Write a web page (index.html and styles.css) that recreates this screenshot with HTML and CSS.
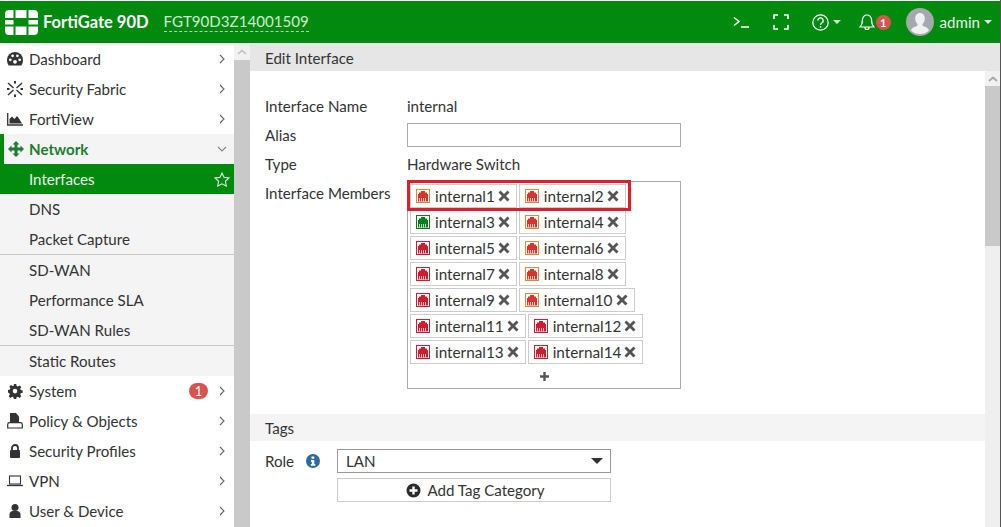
FILE: index.html
```html
<!DOCTYPE html>
<html lang="en">
<head>
    <meta charset="UTF-8">
    <meta name="viewport" content="width=device-width, initial-scale=1.0">
    <title>FortiGate 90D - Edit Interface</title>
    <link rel="stylesheet" href="styles.css">
</head>
<body>
    <svg class="defs" width="0" height="0">
        <symbol id="port" viewBox="0 0 14 14">
            <rect x="0.5" y="0.5" width="13" height="13" fill="#fff" stroke="currentColor"/>
            <path d="M5 2h4v1.500h2v1.500h1v7.500H2V5h1V3.500h2z" fill="currentColor"/>
            <path d="M3.500 9v3.500M5.500 9v3.500M7.500 9v3.500M9.500 9v3.500" stroke="#fff" stroke-width=".7"/>
        </symbol>
        <symbol id="close" viewBox="0 0 12 12">
            <path d="M2.500 0.500L6 4l3.500-3.500 2 2L8 6l3.500 3.500-2 2L6 8l-3.500 3.500-2-2L4 6 .5 2.500z" fill="currentColor"/>
        </symbol>
        <symbol id="chev" viewBox="0 0 8 12">
            <path d="M2 2l4 4-4 4" fill="none" stroke="currentColor" stroke-width="1.100"/>
        </symbol>
    </svg>

    <header class="topbar">
        <svg class="logo" width="33" height="25" viewBox="0 0 33 25">
            <path d="M4 0h4.500v8H0V4a4 4 0 0 1 4-4zM10.500 0h11v8h-11zM23.500 0H29a4 4 0 0 1 4 4v4h-9.500zM0 10h8.500v4.500H0zM23.500 10H33v4.500h-9.500zM0 16.500h8.500V25H4a4 4 0 0 1-4-4zM10.500 16.500h11V25h-11zM23.500 16.500H33V21a4 4 0 0 1-4 4h-5.500z" fill="#fff"/>
        </svg>
        <span class="brand">FortiGate 90D</span>
        <span class="serial">FGT90D3Z14001509</span>

        <div class="topbar-right">
            <svg class="tb-cli" width="16" height="12" viewBox="0 0 16 12">
                <path d="M1 1.500L6 5.500 1 9.500M8 11h8" fill="none" stroke="#fff" stroke-width="1.500"/>
            </svg>
            <svg class="tb-full" width="16" height="16" viewBox="0 0 16 16">
                <path d="M1 5V1h4M11 1h4v4M15 11v4h-4M5 15H1v-4" fill="none" stroke="#fff" stroke-width="1.600"/>
            </svg>
            <svg class="tb-help" width="17" height="17" viewBox="0 0 17 17">
                <circle cx="8.500" cy="8.500" r="7.700" fill="none" stroke="#fff" stroke-width="1.200"/>
                <path d="M5.800 6.600a2.700 2.700 0 1 1 4.200 2.200c-1 .7-1.500 1-1.500 2.200" fill="none" stroke="#fff" stroke-width="1.300"/>
                <rect x="7.800" y="12" width="1.500" height="1.600" fill="#fff"/>
            </svg>
            <span class="caret tb-caret"></span>
            <svg class="tb-bell" width="16" height="17" viewBox="0 0 16 17">
                <path d="M8 1a4.500 4.500 0 0 0-4.500 4.500c0 4-.8 5.800-2.500 7.500h14c-1.700-1.700-2.500-3.500-2.500-7.500A4.500 4.500 0 0 0 8 1zM6 13.500a2 2 0 0 0 4 0" fill="none" stroke="#fff" stroke-width="1.200"/>
            </svg>
            <span class="tb-badge">1</span>
            <svg class="avatar" width="28" height="28" viewBox="0 0 28 28">
                <circle cx="14" cy="14" r="14" fill="#a5a8ac"/>
                <path d="M14 5c3 0 4.800 2.300 4.800 5.500 0 2.500-1 4.500-2.300 5.600v1.700c2.500 1 5.500 1.700 6.500 4.700A13 13 0 0 1 14 26a13 13 0 0 1-9-3.500c1-3 4-3.700 6.500-4.700v-1.700C10.200 15 9.200 13 9.200 10.500 9.200 7.300 11 5 14 5z" fill="#f1f1f1"/>
            </svg>
            <span class="tb-user">admin</span>
            <span class="caret"></span>
        </div>
    </header>

    <div class="layout">
        <nav class="sidebar">
            <a class="nav-item">
                <svg class="nav-icon" viewBox="0 0 16 14"><path d="M8 0a8 8 0 0 0-8 8c0 2.200.7 4 1.600 5.500h12.800C15.300 12 16 10.200 16 8a8 8 0 0 0-8-8z" fill="#333"/><circle cx="3.300" cy="7.800" r="1.400" fill="#fff"/><circle cx="5.600" cy="3.800" r="1.400" fill="#fff"/><circle cx="12.700" cy="7.800" r="1.400" fill="#fff"/><circle cx="10.400" cy="3.800" r="1.400" fill="#fff"/><circle cx="8" cy="9.800" r="1.900" fill="#fff"/></svg>
                <span class="nav-label">Dashboard</span>
                <svg class="chev"><use href="#chev"/></svg>
            </a>
            <a class="nav-item">
                <svg class="nav-icon" viewBox="0 0 16 16"><path d="M1 2l5.500 5M15 2L9.500 7M1 14l5.500-5M15 14L9.500 9" stroke="#333" stroke-width="1.400" fill="none"/><path d="M7 0h2v2.500H7zM7 13.500h2V16H7zM0 7h2.500v2H0zM13.500 7H16v2h-2.500z" fill="#333"/></svg>
                <span class="nav-label">Security Fabric</span>
                <svg class="chev"><use href="#chev"/></svg>
            </a>
            <a class="nav-item">
                <svg class="nav-icon" viewBox="0 0 16 14"><path d="M.7 1v12H16" stroke="#333" stroke-width="1.300" fill="none"/><path d="M2.500 11.500V7l2.500-2.500L7.500 7 10 4l2 2.500 3 5z" fill="#333"/></svg>
                <span class="nav-label">FortiView</span>
                <svg class="chev"><use href="#chev"/></svg>
            </a>
            <a class="nav-item nav-open">
                <svg class="nav-icon" viewBox="0 0 16 16"><path d="M8 0l3.500 3.500h-2v3h3v-2L16 8l-3.500 3.500v-2h-3v3h2L8 16l-3.500-3.500h2v-3h-3v2L0 8l3.500-3.500v2h3v-3h-2z" fill="#1e7d32"/></svg>
                <span class="nav-label">Network</span>
                <svg class="chev chev-down"><use href="#chev"/></svg>
            </a>
            <div class="subnav">
                <a class="sub-item sub-active">
                    <span class="nav-label">Interfaces</span>
                    <svg class="star" width="16" height="15" viewBox="0 0 16 15"><path d="M8 1l2.100 4.400 4.900.6-3.600 3.300.9 4.800L8 11.800l-4.300 2.300.9-4.800L1 6l4.900-.6z" fill="none" stroke="#d5ecd7" stroke-width="1.100"/></svg>
                </a>
                <a class="sub-item">DNS</a>
                <a class="sub-item sub-last">Packet Capture</a>
                <a class="sub-item">SD-WAN</a>
                <a class="sub-item">Performance SLA</a>
                <a class="sub-item sub-last">SD-WAN Rules</a>
                <a class="sub-item">Static Routes</a>
            </div>
            <a class="nav-item">
                <svg class="nav-icon" viewBox="-1 -1 16 16"><path fill-rule="evenodd" d="M5.800 0h2.400l.4 1.900 1.300.6 1.700-1.100 1.700 1.700-1.100 1.700.6 1.300 1.900.3v2.400l-1.900.4-.6 1.300 1.100 1.700-1.700 1.700-1.700-1.100-1.300.5-.4 1.900H5.800l-.4-1.900-1.300-.5-1.700 1.100-1.700-1.700 1.100-1.700-.5-1.300L0 8.400V6l1.900-.4.500-1.300-1.100-1.700L3 .9l1.700 1.100 1.300-.5zM7 4.800a2.300 2.300 0 1 0 0 4.600 2.300 2.300 0 0 0 0-4.600z" fill="#333"/></svg>
                <span class="nav-label">System</span>
                <span class="nav-badge">1</span>
                <svg class="chev"><use href="#chev"/></svg>
            </a>
            <a class="nav-item">
                <svg class="nav-icon" viewBox="0 0 16 16"><path d="M3 0h6l3 3.500V9H3z" fill="#333"/><path d="M.7 15V11.500c0-1 .7-1.800 1.800-1.800h11c1.100 0 1.800.8 1.800 1.800V15z" fill="#fff" stroke="#333" stroke-width="1.200"/></svg>
                <span class="nav-label">Policy &amp; Objects</span>
                <svg class="chev"><use href="#chev"/></svg>
            </a>
            <a class="nav-item">
                <svg class="nav-icon" viewBox="0 0 16 16"><path d="M5 7V5a3 3 0 0 1 6 0v2" fill="none" stroke="#333" stroke-width="1.800"/><rect x="3" y="7" width="10" height="8" rx="1" fill="#333"/></svg>
                <span class="nav-label">Security Profiles</span>
                <svg class="chev"><use href="#chev"/></svg>
            </a>
            <a class="nav-item">
                <svg class="nav-icon" viewBox="0 0 16 14"><rect x="2.500" y="2" width="11" height="8" fill="none" stroke="#333" stroke-width="1.100"/><path d="M0 11.500h16" stroke="#333" stroke-width="1.300"/></svg>
                <span class="nav-label">VPN</span>
                <svg class="chev"><use href="#chev"/></svg>
            </a>
            <a class="nav-item">
                <svg class="nav-icon" viewBox="0 0 16 16"><circle cx="8" cy="4.500" r="3.500" fill="#333"/><path d="M2.500 15v-3.500C2.500 9.500 4 8 6 8h4c2 0 3.500 1.500 3.500 3.500V15z" fill="#333"/></svg>
                <span class="nav-label">User &amp; Device</span>
                <svg class="chev"><use href="#chev"/></svg>
            </a>
        </nav>
        <div class="side-scroll">
            <div class="scroll-arrow"><svg width="10" height="6" viewBox="0 0 10 6"><path d="M1 5l4-3.500L9 5" fill="none" stroke="#bdbdbd" stroke-width="1.500"/></svg></div>
            <div class="side-thumb"></div>
        </div>

        <main class="main">
            <div class="page-title">Edit Interface</div>
            <div class="main-body">
                <div class="content">
                    <div class="form-row">
                        <span class="form-label">Interface Name</span>
                        <span>internal</span>
                    </div>
                    <div class="form-row">
                        <span class="form-label">Alias</span>
                        <input class="text-input" type="text">
                    </div>
                    <div class="form-row">
                        <span class="form-label">Type</span>
                        <span>Hardware Switch</span>
                    </div>
                    <div class="form-row members-row">
                        <span class="form-label">Interface Members</span>
                        <div class="members">
                            <div class="chip"><svg class="port port-orange"><use href="#port"/></svg>internal1<svg class="x"><use href="#close"/></svg></div>
                            <div class="chip"><svg class="port port-orange"><use href="#port"/></svg>internal2<svg class="x"><use href="#close"/></svg></div>
                            <div class="chip"><svg class="port port-green"><use href="#port"/></svg>internal3<svg class="x"><use href="#close"/></svg></div>
                            <div class="chip"><svg class="port port-orange"><use href="#port"/></svg>internal4<svg class="x"><use href="#close"/></svg></div>
                            <div class="chip"><svg class="port"><use href="#port"/></svg>internal5<svg class="x"><use href="#close"/></svg></div>
                            <div class="chip"><svg class="port port-orange"><use href="#port"/></svg>internal6<svg class="x"><use href="#close"/></svg></div>
                            <div class="chip"><svg class="port"><use href="#port"/></svg>internal7<svg class="x"><use href="#close"/></svg></div>
                            <div class="chip"><svg class="port port-orange"><use href="#port"/></svg>internal8<svg class="x"><use href="#close"/></svg></div>
                            <div class="chip"><svg class="port"><use href="#port"/></svg>internal9<svg class="x"><use href="#close"/></svg></div>
                            <div class="chip"><svg class="port port-orange"><use href="#port"/></svg>internal10<svg class="x"><use href="#close"/></svg></div>
                            <div class="chip"><svg class="port"><use href="#port"/></svg>internal11<svg class="x"><use href="#close"/></svg></div>
                            <div class="chip"><svg class="port"><use href="#port"/></svg>internal12<svg class="x"><use href="#close"/></svg></div>
                            <div class="chip"><svg class="port"><use href="#port"/></svg>internal13<svg class="x"><use href="#close"/></svg></div>
                            <div class="chip"><svg class="port"><use href="#port"/></svg>internal14<svg class="x"><use href="#close"/></svg></div>
                            <div class="add-member">
                                <svg width="9" height="9" viewBox="0 0 9 9"><path d="M3.300 0h2.400v3.300H9v2.400H5.700V9H3.300V5.700H0V3.300h3.300z" fill="#555"/></svg>
                            </div>
                            <div class="highlight"></div>
                        </div>
                    </div>

                    <div class="section-bar">Tags</div>
                    <div class="role-row">
                        <span class="role-label">Role</span>
                        <svg class="info" width="14" height="14" viewBox="0 0 14 14">
                            <circle cx="7" cy="7" r="7" fill="#2a6a9c"/>
                            <path d="M5.500 2.500h2.800v2.200H5.500zM5 6h3.300v4H9.300v1.700H4.800V10h1V7.700H5z" fill="#fff"/>
                        </svg>
                        <div class="role-fields">
                            <div class="select">LAN<span class="select-caret"></span></div>
                            <div class="add-tag">
                                <svg width="15" height="15" viewBox="0 0 15 15">
                                    <path fill-rule="evenodd" d="M7.500.5a7 7 0 1 0 0 14 7 7 0 0 0 0-14zM6.300 3.500h2.400v2.800h2.800v2.400H8.700v2.800H6.300V8.700H3.500V6.300h2.800z" fill="#2b2b2b"/>
                                </svg>
                                Add Tag Category
                            </div>
                        </div>
                    </div>
                </div>
                <div class="main-scroll">
                    <div class="scroll-arrow main-arrow"><svg width="10" height="6" viewBox="0 0 10 6"><path d="M1 5l4-3.500L9 5" fill="none" stroke="#a8a8a8" stroke-width="1.800"/></svg></div>
                    <div class="main-thumb"></div>
                </div>
            </div>
        </main>
    </div>
</body>
</html>
```

FILE: styles.css
```css
* {
    box-sizing: border-box;
}

html, body {
    height: 100%;
}

body {
    margin: 0;
    overflow: hidden;
    background-color: #fff;
    color: #333;
    font-family: Lato, "Open Sans", sans-serif;
    font-size: 15.1px;
    display: flex;
    flex-direction: column;
    padding-top: 1px;
    border-right: 1px solid #555;
}

.defs {
    position: absolute;
}

/* barra superior */
.topbar {
    height: 42px;
    flex: none;
    display: flex;
    align-items: center;
    background-color: #028a0f;
    color: #fff;
    padding-left: 5px;
}

.logo {
    flex: none;
}

.brand {
    font-size: 16.500px;
    font-weight: 700;
    margin-left: 5px;
}

.serial {
    margin-left: 15px;
    font-size: 15.100px;
    color: #cfeacf;
    border-bottom: 1px dashed #a7d8a7;
    line-height: 19px;
}

.topbar-right {
    margin-left: auto;
    display: flex;
    align-items: center;
    padding-right: 8px;
}

.tb-full {
    margin-left: 24px;
}

.tb-help {
    margin-left: 23px;
}

.tb-caret {
    margin-left: 4px;
}

.tb-bell {
    margin-left: 18px;
}

.tb-badge {
    width: 15px;
    height: 15px;
    margin-left: 1px;
    border-radius: 50%;
    background-color: #d9534f;
    font-size: 11px;
    font-weight: 700;
    line-height: 15px;
    text-align: center;
}

.avatar {
    margin-left: 15px;
}

.tb-user {
    margin-left: 6px;
    margin-right: 4px;
    color: #e2f2e2;
}

.caret {
    width: 0;
    height: 0;
    border-left: 4px solid transparent;
    border-right: 4px solid transparent;
    border-top: 4px solid #dff0df;
}

/* menu lateral */
.layout {
    flex: 1;
    display: flex;
    min-height: 0;
}

.sidebar {
    width: 234px;
    flex: none;
    padding-top: 1px;
    overflow: hidden;
}

.nav-item {
    height: 30px;
    display: flex;
    align-items: center;
    padding-left: 7px;
    padding-right: 8px;
}

.nav-icon {
    width: 16px;
    height: 16px;
    flex: none;
}

.nav-label {
    margin-left: 6px;
}

.chev {
    width: 8px;
    height: 12px;
    margin-left: auto;
    color: #666;
}

.nav-open {
    background-color: #f4f4f4;
    border-left: 4px solid #028a0f;
    padding-left: 4px;
    color: #1e7d32;
    font-weight: 700;
}

.nav-open .nav-label {
    margin-left: 5px;
}

.chev-down {
    transform: rotate(90deg);
    color: #888;
}

.nav-badge {
    margin-left: auto;
    width: 19px;
    height: 16px;
    border-radius: 8px;
    background-color: #d9534f;
    color: #fff;
    font-size: 13px;
    line-height: 16px;
    text-align: center;
}

.nav-badge + .chev {
    margin-left: 10px;
}

.subnav {
    background-color: #f4f4f4;
}

.sub-item {
    height: 30px;
    display: flex;
    align-items: center;
    padding-left: 29px;
}

.sub-last {
    height: 31px;
    border-bottom: 1px solid #c8c8c8;
}

.sub-active {
    background-color: #028a0f;
    color: #e9f5e9;
    padding-right: 4px;
    justify-content: space-between;
}

.sub-active .nav-label {
    margin-left: 0;
}

.side-scroll {
    width: 16px;
    flex: none;
    display: flex;
    flex-direction: column;
    background-color: #f1f1f1;
}

.scroll-arrow {
    height: 17px;
    flex: none;
    display: flex;
    align-items: center;
    justify-content: center;
    background-color: #f1f1f1;
}

.side-thumb {
    flex: 1;
    background-color: #c9c9c9;
}

/* contenido */
.main {
    flex: 1;
    min-width: 0;
    display: flex;
    flex-direction: column;
}

.page-title {
    height: 28px;
    flex: none;
    padding-left: 15px;
    line-height: 30px;
    background-color: #e6e6e6;
}

.main-body {
    flex: 1;
    min-height: 0;
    display: flex;
}

.content {
    flex: 1;
    padding-top: 23px;
    overflow: hidden;
}

.form-row {
    display: flex;
    align-items: center;
    min-height: 24px;
    margin-bottom: 5px;
    padding-left: 15px;
}

.form-label {
    width: 142px;
    flex: none;
}

.text-input {
    width: 274px;
    height: 24px;
    padding: 0 8px;
    border: 1px solid #aaa;
    background-color: #fff;
}

.members-row {
    align-items: flex-start;
    margin-bottom: 25px;
}

.members-row .form-label {
    line-height: 24px;
}

.members {
    position: relative;
    width: 274px;
    height: 208px;
    padding: 2px 2px 0;
    border: 1px solid #aaa;
    display: flex;
    flex-wrap: wrap;
    align-content: flex-start;
    gap: 2px;
}

.chip {
    height: 24px;
    display: flex;
    align-items: center;
    padding: 0 6px 0 5px;
    border: 1px solid #ccc;
    font-size: 15.300px;
    white-space: nowrap;
}

.port {
    width: 14px;
    height: 14px;
    margin-right: 5px;
    color: #cb1f2f;
}

.port-orange {
    color: #d8342a;
    outline: 1px solid #d98a3c;
    outline-offset: -1px;
}

.port-green {
    color: #0a7d1c;
}

.x {
    width: 12px;
    height: 12px;
    margin-left: 3px;
    color: #555;
}

.add-member {
    width: 100%;
    height: 20px;
    display: flex;
    align-items: center;
    justify-content: center;
}

/* recuadro rojo sobre los dos primeros miembros */
.highlight {
    position: absolute;
    left: -1px;
    top: -2px;
    width: 224px;
    height: 31px;
    border: 3px solid #d9202c;
}

.section-bar {
    height: 27px;
    padding-left: 15px;
    line-height: 29px;
    background-color: #f4f4f4;
}

.role-row {
    display: flex;
    align-items: flex-start;
    padding: 8px 0 0 15px;
}

.role-label {
    width: 41px;
    line-height: 24px;
}

.info {
    margin-top: 5px;
}

.role-fields {
    margin-left: 17px;
    width: 274px;
    display: flex;
    flex-direction: column;
    gap: 5px;
}

.select {
    height: 24px;
    padding: 0 8px;
    border: 1px solid #999;
    display: flex;
    align-items: center;
    justify-content: space-between;
}

.select-caret {
    width: 0;
    height: 0;
    border-left: 6px solid transparent;
    border-right: 6px solid transparent;
    border-top: 6px solid #333;
    margin-right: -1px;
}

.add-tag {
    height: 24px;
    padding-left: 3px;
    border: 1px solid #ccc;
    display: flex;
    align-items: center;
    justify-content: center;
    gap: 6px;
}

.main-scroll {
    width: 15px;
    flex: none;
    display: flex;
    flex-direction: column;
    background-color: #efefef;
}

.main-arrow {
    height: 15px;
}

.main-thumb {
    height: 160px;
    background-color: #c9c9c9;
}
```
